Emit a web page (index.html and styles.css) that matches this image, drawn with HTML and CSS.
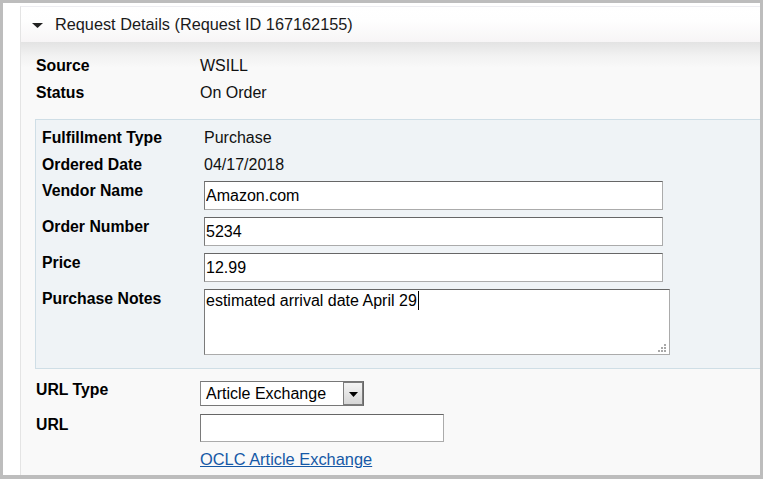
FILE: index.html
```html
<!DOCTYPE html>
<html>
<head>
<meta charset="utf-8">
<link rel="stylesheet" href="styles.css">
</head>
<body>
<div class="frame">
  <div class="panel">
    <div class="header">
      <svg class="caret-down" width="11" height="5" viewBox="0 0 11 5"><path d="M0 0H11L5.5 5Z" fill="#222"/></svg>
      <span class="title">Request Details (Request ID 167162155)</span>
    </div>
    <div class="content">
      <div class="grid outer">
        <div class="label">Source</div><div class="value">WSILL</div>
        <div class="label">Status</div><div class="value">On Order</div>
      </div>
      <div class="box">
        <div class="grid inner">
          <div class="label">Fulfillment Type</div><div class="value">Purchase</div>
          <div class="label">Ordered Date</div><div class="value">04/17/2018</div>
        </div>
        <div class="grid inner fields">
          <div class="flabel">Vendor Name</div><div><input class="text wide" type="text" value="Amazon.com"></div>
          <div class="flabel">Order Number</div><div><input class="text wide" type="text" value="5234"></div>
          <div class="flabel">Price</div><div><input class="text wide" type="text" value="12.99"></div>
          <div class="flabel">Purchase Notes</div>
          <div class="notes">estimated arrival date April 29<span class="cursor"></span>
            <svg class="grip" width="9" height="9" viewBox="0 0 9 9">
              <rect x="6" y="0" width="2" height="2" fill="#a8a8a8"/>
              <rect x="3" y="3" width="2" height="2" fill="#a8a8a8"/>
              <rect x="6" y="3" width="2" height="2" fill="#a8a8a8"/>
              <rect x="0" y="6" width="2" height="2" fill="#a8a8a8"/>
              <rect x="3" y="6" width="2" height="2" fill="#a8a8a8"/>
              <rect x="6" y="6" width="2" height="2" fill="#a8a8a8"/>
            </svg>
          </div>
        </div>
      </div>
      <div class="grid outer lower">
        <div class="flabel urltype">URL Type</div>
        <div class="select"><span class="sel-text">Article Exchange</span><span class="sel-btn"><svg width="9" height="5" viewBox="0 0 9 5"><path d="M0 0H9L4.5 5Z" fill="#000"/></svg></span></div>
        <div class="flabel url">URL</div>
        <div><input class="text short" type="text" value=""></div>
        <div></div>
        <div><a class="link" href="#">OCLC Article Exchange</a></div>
      </div>
    </div>
  </div>
</div>
</body>
</html>
```
FILE: styles.css
```css
html, body {
  margin: 0;
  padding: 0;
}
body {
  width: 763px;
  height: 479px;
  box-sizing: border-box;
  background: #bdbdbd;
  padding: 3px 3px 4px 3px;
  font-family: "Liberation Sans", Arial, sans-serif;
  overflow: hidden;
}
.frame {
  height: 472px;
  background: #fff;
  box-sizing: border-box;
  padding: 3px 0 0 17px;
  overflow: hidden;
}
.panel {
  height: 469px;
  box-sizing: border-box;
  border-left: 1px solid #e4e4e4;
  border-top: 1px solid #ededf1;
  background: #f9f9f9;
  overflow: hidden;
}
.header {
  height: 35px;
  display: flex;
  align-items: center;
  padding-left: 11px;
  background: linear-gradient(#ffffff 0%, #fefefe 40%, #f7f5f6 100%);
  font-size: 16.3px;
  color: #1a1a1a;
}
.caret-down {
  margin-top: 2px;
  margin-right: 12px;
}
.content {
  background: linear-gradient(#e3e3e3 0px, #f2f2f2 14px, #f9f9f9 26px, #f9f9f9 100%);
  padding: 10px 0 0 14px;
  height: 100%;
}
.grid {
  display: grid;
}
.outer {
  grid-template-columns: 164px 1fr;
  padding-left: 1px;
}
.label, .value {
  line-height: 27px;
  height: 27px;
}
.label, .flabel {
  font-weight: bold;
  font-size: 15.8px;
  color: #000;
}
.value {
  font-size: 16px;
  color: #111;
}
.box {
  margin-top: 13px;
  background: #eff3f6;
  border: 1px solid #cfdee6;
  border-right: none;
  padding: 4px 0 13px 6px;
}
.inner {
  grid-template-columns: 162px 1fr;
}
.fields {
  margin-top: 3px;
  row-gap: 7px;
}
.flabel {
  line-height: 20px;
}
input.text {
  display: block;
  box-sizing: border-box;
  height: 29px;
  margin: 0;
  padding: 0 1px;
  border: 1px solid;
  border-color: #666 #ababab #ababab #7a7a7a;
  font-family: "Liberation Sans", Arial, sans-serif;
  font-size: 16px;
  color: #000;
  background: #fff;
  outline: none;
}
.wide {
  width: 459px;
}
.notes {
  position: relative;
  box-sizing: border-box;
  width: 466px;
  height: 66px;
  border: 1px solid;
  border-color: #666 #ababab #ababab #7a7a7a;
  background: #fff;
  font-size: 16px;
  color: #000;
  padding: 1px 1px;
  line-height: 20px;
}
.cursor {
  display: inline-block;
  width: 1px;
  height: 19px;
  background: #000;
  vertical-align: -4px;
  margin-left: 1px;
}
.grip {
  position: absolute;
  right: 2px;
  bottom: 1px;
}
.lower {
  margin-top: 12px;
  padding-left: 1px;
}
.urltype {
  margin-top: -1px;
}
.url {
  margin-top: 1px;
}
.select {
  box-sizing: border-box;
  width: 164px;
  height: 25px;
  border: 1px solid;
  border-color: #777 #666 #777 #888;
  background: #fff;
  display: flex;
  align-items: center;
  justify-content: space-between;
  margin-bottom: 8px;
}
.sel-text {
  font-size: 16px;
  color: #000;
  padding-left: 5px;
}
.sel-btn {
  box-sizing: border-box;
  width: 20px;
  height: 23px;
  border: 1px solid #7d7d7d;
  background: linear-gradient(#f4f4f4, #d6d6d6);
  display: flex;
  align-items: center;
  justify-content: center;
}
.sel-btn svg {
  margin-top: 1px;
}
.short {
  width: 244px;
  height: 28px !important;
}
.link {
  display: inline-block;
  margin-top: 7px;
  font-size: 16.4px;
  line-height: 20px;
  color: #1558a6;
  text-decoration: underline;
}
```
